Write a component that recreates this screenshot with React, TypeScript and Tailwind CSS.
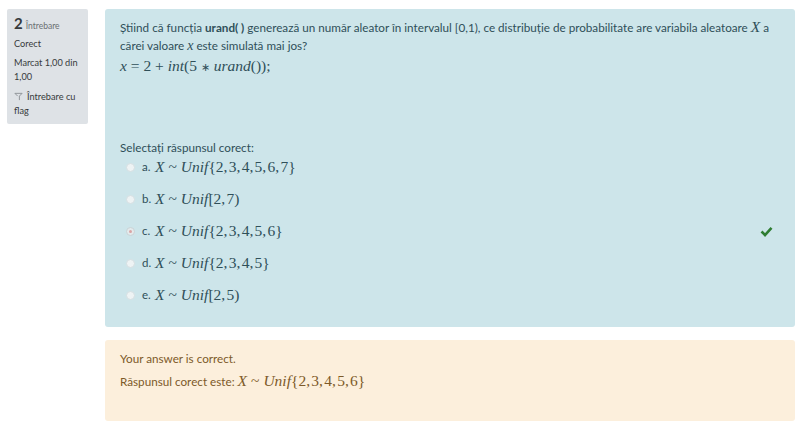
import React from "react";

function M({ children, big }: { children: React.ReactNode; big?: boolean }) {
  return (
    <span
      className={`font-['Liberation_Serif',serif] leading-none ${
        big ? "text-[15.5px]" : "text-[14px]"
      }`}
    >
      {children}
    </span>
  );
}

function I({ children }: { children: React.ReactNode }) {
  return <i className="italic">{children}</i>;
}

function Formula({ set }: { set: string }) {
  return (
    <M big>
      <I>X</I>
      <span className="mx-[4px]">~</span>
      <I>Unif</I>
      {set}
    </M>
  );
}

const answers = [
  { label: "a.", set: "{2,\u200A3,\u200A4,\u200A5,\u200A6,\u200A7}", checked: false, correct: false },
  { label: "b.", set: "[2,\u200A7)", checked: false, correct: false },
  { label: "c.", set: "{2,\u200A3,\u200A4,\u200A5,\u200A6}", checked: true, correct: true },
  { label: "d.", set: "{2,\u200A3,\u200A4,\u200A5}", checked: false, correct: false },
  { label: "e.", set: "[2,\u200A5)", checked: false, correct: false },
];

export default function App() {
  return (
    <div className="flex h-[427px] w-[800px] items-start gap-[17px] overflow-hidden bg-white pl-[7px] pt-[9px] font-['Lato',sans-serif] text-[#2f4f59]">
      {/* Question info */}
      <div className="h-[115px] w-[81px] shrink-0 rounded-[2px] bg-[#dee2e6] px-[7px] pt-[5px] text-[9.2px] leading-[14px] text-[#373a3c]">
        <div className="mb-[4px] flex items-baseline gap-[3px]">
          <span className="text-[15px] font-bold leading-[18px]">2</span>
          <span className="text-[8.5px] text-[#6a6f73]">Întrebare</span>
        </div>
        <div className="mb-[5px]">Corect</div>
        <div className="mb-[6px]">Marcat 1,00 din 1,00</div>
        <div>
          <svg className="mr-[4px] inline-block h-[9px] w-[9px] align-[-1px]" viewBox="0 0 10 10" fill="none" stroke="#8a8f94" strokeWidth="1">
            <path d="M1 1.5 H9 L6 4.5 V9 M1 1.5 L4 4.5" />
          </svg>
          Întrebare cu flag
        </div>
      </div>

      <div className="flex w-[690px] flex-col gap-[13px]">
        {/* Question */}
        <div className="relative h-[318px] rounded-[3px] bg-[#cde5ea] px-[15px] pt-[9px] text-[11.7px] leading-[18px]">
          <p>
            Știind că funcția <b className="font-bold">urand( )</b> generează un număr aleator în intervalul [0,1), ce distribuție de probabilitate are variabila aleatoare{" "}
            <M big><I>X</I></M> a cărei valoare <M><I>x</I></M> este simulată mai jos?
          </p>
          <p className="mt-[3px]">
            <M big>
              <I>x</I> = 2 + <I>int</I>(5 <span className="text-[11px]">∗</span> <I>urand</I>());
            </M>
          </p>
          <p className="mt-[63px]">Selectați răspunsul corect:</p>
          <div className="mt-[2px] flex flex-col gap-[14px] pl-[6px]">
            {answers.map((a) => (
              <div key={a.label} className="flex h-[18px] items-center">
                <span
                  className={`mr-[7px] flex h-[9px] w-[9px] items-center justify-center rounded-full border ${
                    a.checked ? "border-[#c9d3d6] bg-[#e3eaec]" : "border-[#d5dfe2] bg-[#eef3f4]"
                  }`}
                >
                  {a.checked && <span className="h-[3px] w-[3px] rounded-full bg-[#d9a5a5]" />}
                </span>
                <span className="mr-[3px] w-[10px] text-[11.5px]">{a.label}</span>
                <Formula set={a.set} />
                {a.correct && (
                  <svg className="absolute right-[22px] h-[11px] w-[13px]" viewBox="0 0 13 11" fill="none" stroke="#2e7d32" strokeWidth="2.6">
                    <path d="M1.5 5.5 L5 9 L11.5 1.8" />
                  </svg>
                )}
              </div>
            ))}
          </div>
        </div>

        {/* Feedback */}
        <div className="h-[81px] rounded-[3px] bg-[#fcefdc] px-[15px] pt-[9px] text-[11.7px] leading-[18px] text-[#7d5a29]">
          <p>Your answer is correct.</p>
          <p className="mt-[5px]">
            Răspunsul corect este: <Formula set={"{2,\u200A3,\u200A4,\u200A5,\u200A6}"} />
          </p>
        </div>
      </div>
    </div>
  );
}
